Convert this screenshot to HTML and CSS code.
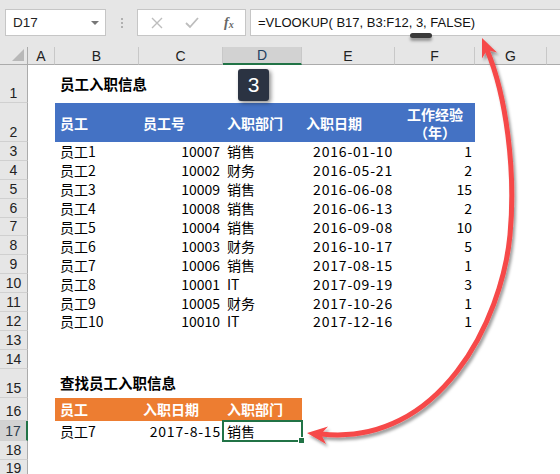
FILE: index.html
```html
<!DOCTYPE html>
<html>
<head>
<meta charset="utf-8">
<link rel="stylesheet" href="styles.css">
</head>
<body>
<div class="app">
  <div class="toolbar">
    <div class="namebox"><span>D17</span><span class="dd"></span></div>
    <div class="grip"><i></i><i></i><i></i></div>
    <div class="fxbox">
      <svg class="ico" width="14" height="14" viewBox="0 0 14 14"><path d="M2 2L12 12M12 2L2 12" stroke="#bdbdbd" stroke-width="1.4" fill="none"/></svg>
      <svg class="ico" width="16" height="14" viewBox="0 0 16 14"><path d="M2 7L6 11L14 2" stroke="#bdbdbd" stroke-width="1.8" fill="none"/></svg>
      <span class="fx">f<sub>x</sub></span>
    </div>
    <div class="formula">=VLOOKUP( B17, B3:F12, 3, FALSE)</div>
  </div>

  <div class="sheet">
    <div class="row hdr">
      <div class="corner"><svg width="12" height="12" viewBox="0 0 12 12"><path d="M12 0L12 12L0 12Z" fill="#b8b8b8"/></svg></div>
      <div class="ch">A</div><div class="ch">B</div><div class="ch">C</div><div class="ch sel">D</div><div class="ch">E</div><div class="ch">F</div><div class="ch">G</div><div class="ch last"></div>
    </div>
    <div class="row r1"><div class="rh">1</div><div class="c cb title">员工入职信息</div></div>
    <div class="row r2 blue">
      <div class="rh">2</div>
      <div class="c cb">员工</div><div class="c cc">员工号</div><div class="c cd">入职部门</div><div class="c ce">入职日期</div><div class="c cf center"><span class="two">工作经验<br>（年）</span></div>
    </div>
    <div class="row"><div class="rh">3</div><div class="c cb">员工1</div><div class="c cc r">10007</div><div class="c cd">销售</div><div class="c ce r date">2016-01-10</div><div class="c cf r">1</div></div>
    <div class="row"><div class="rh">4</div><div class="c cb">员工2</div><div class="c cc r">10002</div><div class="c cd">财务</div><div class="c ce r date">2016-05-21</div><div class="c cf r">2</div></div>
    <div class="row"><div class="rh">5</div><div class="c cb">员工3</div><div class="c cc r">10009</div><div class="c cd">销售</div><div class="c ce r date">2016-06-08</div><div class="c cf r">15</div></div>
    <div class="row"><div class="rh">6</div><div class="c cb">员工4</div><div class="c cc r">10008</div><div class="c cd">销售</div><div class="c ce r date">2016-06-13</div><div class="c cf r">2</div></div>
    <div class="row"><div class="rh">7</div><div class="c cb">员工5</div><div class="c cc r">10004</div><div class="c cd">销售</div><div class="c ce r date">2016-09-08</div><div class="c cf r">10</div></div>
    <div class="row"><div class="rh">8</div><div class="c cb">员工6</div><div class="c cc r">10003</div><div class="c cd">财务</div><div class="c ce r date">2016-10-17</div><div class="c cf r">5</div></div>
    <div class="row"><div class="rh">9</div><div class="c cb">员工7</div><div class="c cc r">10006</div><div class="c cd">销售</div><div class="c ce r date">2017-08-15</div><div class="c cf r">1</div></div>
    <div class="row"><div class="rh">10</div><div class="c cb">员工8</div><div class="c cc r">10001</div><div class="c cd">IT</div><div class="c ce r date">2017-09-19</div><div class="c cf r">3</div></div>
    <div class="row"><div class="rh">11</div><div class="c cb">员工9</div><div class="c cc r">10005</div><div class="c cd">财务</div><div class="c ce r date">2017-10-26</div><div class="c cf r">1</div></div>
    <div class="row"><div class="rh">12</div><div class="c cb">员工10</div><div class="c cc r">10010</div><div class="c cd">IT</div><div class="c ce r date">2017-12-16</div><div class="c cf r">1</div></div>
    <div class="row"><div class="rh">13</div></div>
    <div class="row"><div class="rh">14</div></div>
    <div class="row r15"><div class="rh">15</div><div class="c cb title">查找员工入职信息</div></div>
    <div class="row r16 orange"><div class="rh">16</div><div class="c cb">员工</div><div class="c cc">入职日期</div><div class="c cd">入职部门</div></div>
    <div class="row r17"><div class="rh selr">17</div><div class="c cb">员工7</div><div class="c cc r date">2017-8-15</div><div class="c cd active">销售</div></div>
    <div class="row"><div class="rh">18</div></div>
    <div class="row"><div class="rh">19</div></div>
  </div>

  <div class="badge">3</div>
  <div class="pill"></div>

  <svg class="arrow" width="560" height="474" viewBox="0 0 560 474">
    <defs>
      <filter id="sh" x="-20%" y="-20%" width="140%" height="140%">
        <feDropShadow dx="2" dy="3" stdDeviation="1.8" flood-color="#000" flood-opacity="0.38"/>
      </filter>
    </defs>
    <g filter="url(#sh)">
      <path d="M487 50 C506 95 516 170 510 235 C502 320 440 447 321 434" stroke="#f64848" stroke-width="5" fill="none"/>
      <polygon points="482,38 497,52.5 487,50 482,58.5" fill="#f64848"/>
      <polygon points="307,433 328,426.5 321,434 326,444" fill="#f64848"/>
    </g>
  </svg>
</div>
</body>
</html>
```

FILE: styles.css
```css
html, body {
  margin: 0;
  padding: 0;
  background: #ffffff;
}

.app {
  position: relative;
  width: 560px;
  height: 474px;
  overflow: hidden;
  font-family: "Noto Sans CJK SC", "Liberation Sans", sans-serif;
}

/* ---------- toolbar ---------- */
.toolbar {
  height: 47px;
  background: #e6e6e6;
  display: flex;
  align-items: flex-start;
  padding-top: 9px;
  box-sizing: border-box;
}

.namebox {
  margin-left: 5px;
  width: 101px;
  height: 27px;
  box-sizing: border-box;
  background: #fff;
  border: 1px solid #c6c6c6;
  display: flex;
  align-items: center;
  justify-content: space-between;
  padding: 0 6px 0 7px;
  font-family: "Liberation Sans", sans-serif;
  font-size: 13.5px;
  color: #222;
}

.dd {
  width: 0;
  height: 0;
  border-left: 4px solid transparent;
  border-right: 4px solid transparent;
  border-top: 4px solid #777;
}

.grip {
  width: 31px;
  height: 27px;
  display: flex;
  flex-direction: column;
  align-items: center;
  justify-content: center;
  gap: 2px;
}

.grip i {
  display: block;
  width: 2px;
  height: 2px;
  background: #b0b0b0;
}

.fxbox {
  width: 109px;
  height: 27px;
  box-sizing: border-box;
  background: #fff;
  border: 1px solid #c6c6c6;
  display: flex;
  align-items: center;
  padding-left: 12px;
  gap: 20px;
}

.fx {
  font-family: "Liberation Serif", serif;
  font-style: italic;
  font-weight: bold;
  font-size: 14px;
  color: #666;
  margin-left: 4px;
}

.fx sub {
  font-size: 10px;
  vertical-align: -1px;
}

.formula {
  margin-left: 4px;
  flex: 1;
  height: 27px;
  box-sizing: border-box;
  background: #fff;
  border: 1px solid #c6c6c6;
  border-right: none;
  display: flex;
  align-items: center;
  padding-left: 7px;
  font-family: "Liberation Sans", sans-serif;
  font-size: 13px;
  color: #111;
  white-space: pre;
}

/* ---------- sheet ---------- */
.row {
  display: grid;
  grid-template-columns: 28px 27px 84px 84px 79px 93px 80px 72px 1fr;
  height: 18.9px;
}

.hdr { height: 18px; }
.r1 { height: 38px; }
.r2 { height: 39px; }
.r15 { height: 29px; }
.r16 { height: 23px; }
.r17 { height: 20px; }

.corner, .ch {
  background: #e6e6e6;
  border-right: 1px solid #c8c8c8;
  border-bottom: 1px solid #ababab;
  box-sizing: border-box;
}

.corner {
  display: flex;
  align-items: flex-end;
  justify-content: flex-end;
  padding: 0 3px 3px 0;
  border-right-color: #ababab;
}

.ch {
  display: flex;
  align-items: center;
  justify-content: center;
  font-family: "Liberation Sans", sans-serif;
  font-size: 14px;
  color: #222;
}

.ch.sel {
  background: #d2d2d2;
  border-bottom: 2px solid #217346;
  color: #1f3f5f;
}

.ch.last { border-right: none; }

.rh {
  grid-column: 1;
  background: #e6e6e6;
  border-right: 1px solid #ababab;
  border-bottom: 1px solid #d0d0d0;
  box-sizing: border-box;
  display: flex;
  align-items: flex-end;
  justify-content: center;
  font-family: "Liberation Sans", sans-serif;
  font-size: 14px;
  line-height: 17px;
  color: #222;
}

.rh.selr {
  background: #d2d2d2;
  border-right: 2px solid #217346;
  color: #2a3a4a;
}

.c {
  display: flex;
  align-items: center;
  padding: 0 4px;
  font-size: 14px;
  line-height: 18px;
  color: #000;
  white-space: nowrap;
  box-sizing: border-box;
  grid-row: 1;
}

.cb { grid-column: 3; padding-left: 5px; }
.cc { grid-column: 4; }
.cd { grid-column: 5; }
.ce { grid-column: 6; }
.cf { grid-column: 7; }

.c.r {
  justify-content: flex-end;
  padding-right: 3px;
}

.c.date {
  letter-spacing: 0.8px;
  padding-right: 2px;
}

.c.center {
  justify-content: center;
  text-align: center;
}

.two {
  display: block;
  line-height: 18px;
}

.title {
  font-weight: bold;
  font-size: 14.5px;
  overflow: visible;
}

.blue .c {
  background: #4472c4;
  color: #fff;
  font-weight: bold;
}

.orange .c {
  background: #ed7d31;
  color: #fff;
  font-weight: bold;
}

.c.active {
  position: relative;
  outline: 2px solid #217346;
  outline-offset: -1px;
}

.c.active::after {
  content: "";
  position: absolute;
  right: -3px;
  bottom: -3px;
  width: 5px;
  height: 5px;
  background: #217346;
  border: 1px solid #fff;
}

/* ---------- overlays ---------- */
.badge {
  position: absolute;
  left: 238px;
  top: 69px;
  width: 31px;
  height: 32px;
  background: #2b3342;
  border-radius: 3px;
  box-shadow: 2px 2px 4px rgba(0, 0, 0, 0.45);
  color: #fff;
  font-family: "Liberation Sans", sans-serif;
  font-size: 21px;
  display: flex;
  align-items: center;
  justify-content: center;
}

.pill {
  position: absolute;
  left: 410px;
  top: 33px;
  width: 22px;
  height: 5px;
  border-radius: 3px;
  background: #3a3a3a;
  box-shadow: 0 3px 3px rgba(0, 0, 0, 0.35);
}

.arrow {
  position: absolute;
  left: 0;
  top: 0;
  pointer-events: none;
}
```
